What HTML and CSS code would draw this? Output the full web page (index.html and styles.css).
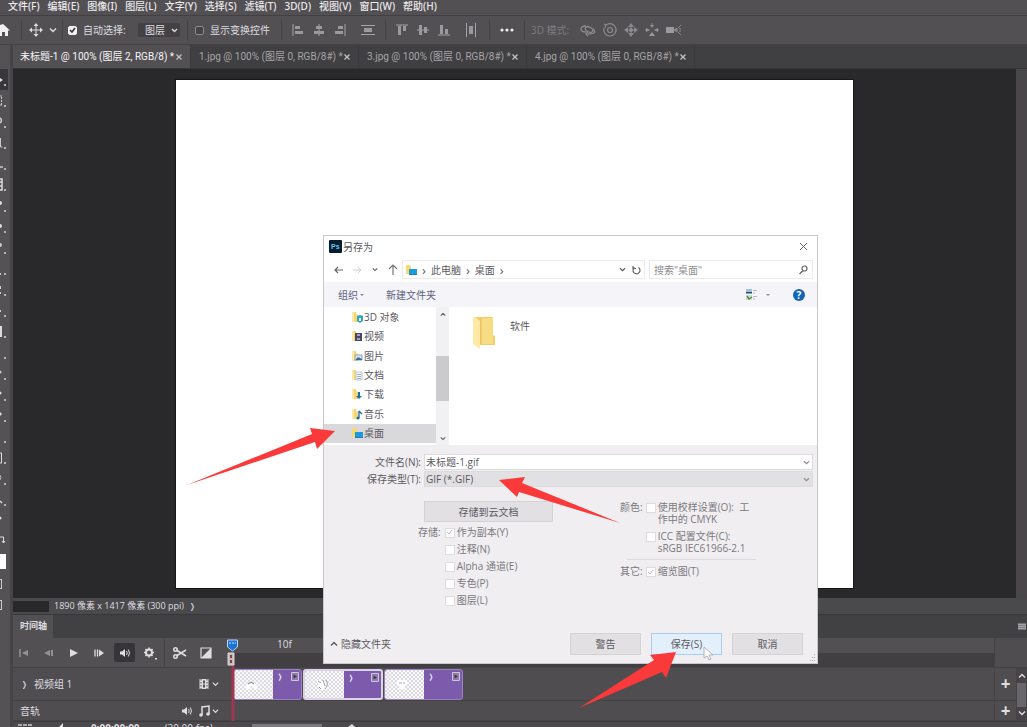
FILE: index.html
```html
<!DOCTYPE html>
<html lang="zh-CN">
<head>
<meta charset="utf-8">
<title>另存为</title>
<link rel="stylesheet" href="styles.css">
</head>
<body>
<svg class="defs" aria-hidden="true">
  <defs>
    <pattern id="checker" width="4" height="4" patternUnits="userSpaceOnUse"><rect width="4" height="4" fill="#f8f7f9"/><path d="M0 0h2v2H0zM2 2h2v2H2z" fill="#dddce0"/></pattern>
    <symbol id="chev" viewBox="0 0 8 6"><path d="M1 1.500 4 4.500 7 1.500" fill="none" stroke="currentColor" stroke-width="1.400"/></symbol>
    <symbol id="cross" viewBox="0 0 6 6"><path d="m.5.5 5 5M5.500.5l-5 5" fill="none" stroke="#c4c2c6" stroke-width="1.200"/></symbol>
    <symbol id="folder" viewBox="0 0 12 12"><path d="M1 1h4v2l2 1v7H1z" fill="#f3d774"/><path d="M1 1h2v10H1z" fill="#fbe9a5"/></symbol>
    <symbol id="desk" viewBox="0 0 12 12"><path d="M1 1h4l1 2v7H1z" fill="#f6d970"/><path d="M4 5h8v5H4z" fill="#1a9be0"/><path d="M4 10h8v1H4z" fill="#2f79b5"/></symbol>
    <symbol id="speaker" viewBox="0 0 12 10"><path d="M1 3.500h2L6 1v8L3 6.500H1z" fill="currentColor"/><path d="M7.500 3q1.500 2 0 4M9.300 1.500q2.500 3.500 0 7" fill="none" stroke="currentColor"/></symbol>
    <symbol id="clipend" viewBox="0 0 8 10"><path d="M.5.5h7v8h-7z" fill="#8f7da8" stroke="#d0c5dc"/><path d="M2.500 2.500v4L6 4.500z" fill="#3f3355"/></symbol>
  </defs>
</svg>

<div class="app">
  <nav class="menubar">
    <button>文件(F)</button><button>编辑(E)</button><button>图像(I)</button><button>图层(L)</button><button>文字(Y)</button><button>选择(S)</button><button>滤镜(T)</button><button>3D(D)</button><button>视图(V)</button><button>窗口(W)</button><button>帮助(H)</button>
  </nav>

  <div class="options">
    <div class="group g-home"><button class="ico" aria-label="主页"><svg width="10" height="12" viewBox="0 0 10 12"><path d="M0 1 3 0l7 6.500H8V12H5V8H2v4H0z" fill="#f0eff1"/></svg></button></div>
    <div class="group g-move">
      <button class="ico" aria-label="移动工具"><svg width="14" height="14" viewBox="0 0 14 14"><path d="M7 2v10M2 7h10" stroke="#dddcde"/><path d="m7 0 2.500 3h-5zM7 14l2.500-3h-5zM0 7l3-2.500v5zM14 7l-3-2.500v5z" fill="#dddcde"/></svg></button>
      <svg width="8" height="6"><use href="#chev"/></svg>
    </div>
    <div class="group g-auto">
      <label><input type="checkbox" class="dark" checked>自动选择:</label>
      <select class="layer-select" aria-label="自动选择"><option>图层</option></select>
    </div>
    <div class="group g-show"><label><input type="checkbox" class="dark">显示变换控件</label></div>
    <div class="group g-align">
      <button class="ico" aria-label="左对齐"><svg width="12" height="12" viewBox="0 0 12 12"><path d="M1 0v12" stroke="#a5a3a7"/><path d="M3 2h5v3H3zM3 7h8v3H3z" fill="#9b999d"/></svg></button>
      <button class="ico" aria-label="水平居中"><svg width="12" height="12" viewBox="0 0 12 12"><path d="M6 0v12" stroke="#a5a3a7"/><path d="M3 2h6v3H3zM1 7h10v3H1z" fill="#9b999d"/></svg></button>
      <button class="ico" aria-label="右对齐"><svg width="12" height="12" viewBox="0 0 12 12"><path d="M11 0v12" stroke="#a5a3a7"/><path d="M4 2h5v3H4zM1 7h8v3H1z" fill="#9b999d"/></svg></button>
      <button class="ico last" aria-label="垂直分布"><svg width="14" height="12" viewBox="0 0 14 12"><path d="M0 1.500h14M0 10.500h14" stroke="#a5a3a7"/><path d="M3 4h8v4H3z" fill="#9b999d"/></svg></button>
    </div>
    <div class="group g-align2">
      <button class="ico" aria-label="顶对齐"><svg width="12" height="12" viewBox="0 0 12 12"><path d="M0 1h12" stroke="#a5a3a7"/><path d="M2 2h3v9H2zM7 2h3v5H7z" fill="#9b999d"/></svg></button>
      <button class="ico" aria-label="垂直居中"><svg width="12" height="12" viewBox="0 0 12 12"><path d="M0 6h12" stroke="#a5a3a7"/><path d="M2 1h3v10H2zM7 3h3v6H7z" fill="#9b999d"/></svg></button>
      <button class="ico" aria-label="底对齐"><svg width="12" height="12" viewBox="0 0 12 12"><path d="M0 11h12" stroke="#a5a3a7"/><path d="M2 1h3v9H2zM7 5h3v5H7z" fill="#9b999d"/></svg></button>
      <button class="ico last" aria-label="水平分布"><svg width="12" height="14" viewBox="0 0 12 14"><path d="M1.500 0v14M10.500 0v14" stroke="#a5a3a7"/><path d="M4 3h4v8H4z" fill="#9b999d"/></svg></button>
    </div>
    <div class="group g-more"><button class="ico" aria-label="更多"><svg width="14" height="4" viewBox="0 0 14 4"><circle cx="2" cy="2" r="1.600" fill="#eee"/><circle cx="7" cy="2" r="1.600" fill="#eee"/><circle cx="12" cy="2" r="1.600" fill="#eee"/></svg></button></div>
    <div class="group g-3d">
      <span class="dim">3D 模式:</span>
      <svg width="16" height="14" viewBox="0 0 16 14" fill="none" stroke="#8b898d" stroke-width="1.300"><ellipse cx="9" cy="6.500" rx="4" ry="2.500" transform="rotate(25 9 6.500)"/><path d="M6 3Q1 3 1 6t5 3M13 6q3 3 1 4t-6 1M8 13l-2-2 2-2"/></svg>
      <svg width="14" height="14" viewBox="0 0 14 14" fill="none" stroke="#8b898d" stroke-width="1.200"><path d="M3 2a6.200 6.200 0 1 1-2 3M1 1l2 1-1 3"/><circle cx="7" cy="7" r="2.500"/></svg>
      <svg width="14" height="14" viewBox="0 0 14 14"><path d="M7 2v10M2 7h10" stroke="#8b898d"/><path d="m7 0 3 4H4zM7 14l3-4H4zM0 7l4-3v6zM14 7l-4-3v6z" fill="#8b898d"/><circle cx="7" cy="7" r="2" fill="#8b898d"/></svg>
      <svg width="14" height="14" viewBox="0 0 14 14"><path d="M7 5 5 2h4zM7 9l-3 4h6zM5 7 1 5v4zM9 7l4-2v4z" fill="#9b999d"/><path d="M7 0v4M0 7h4M10 7h4" stroke="#8b898d"/></svg>
      <svg width="16" height="10" viewBox="0 0 16 10"><path d="M0 2h8v6H0z" fill="#9b999d"/><path d="m8 5 3-2v4zM15 0l-3 3M15 10l-3-3M14 3v4" stroke="#8b898d" fill="#8b898d"/></svg>
    </div>
  </div>

  <div class="work">
    <div class="tools">
      <button class="on" aria-label="移动"><svg viewBox="0 0 8 20"><path d="M0 8l3 2-3 2z" fill="#ddd"/></svg></button>
      <button aria-label="选框"><svg viewBox="0 0 8 20"><path d="M0 5h2M0 14h2M1.500 6v9" stroke="#c8c6ca" stroke-dasharray="2 1"/></svg></button>
      <button aria-label="套索"><svg viewBox="0 0 8 20"><path d="M0 6q2 1 1 4l-1 1" fill="none" stroke="#ccc" stroke-width="1.500"/></svg></button>
      <button aria-label="选择"><svg viewBox="0 0 8 20"><path d="M.5 5v9h2" fill="none" stroke="#ccc"/></svg></button>
      <button aria-label="裁剪"><svg viewBox="0 0 8 20"><path d="M0 13h3" stroke="#ccc" stroke-width="1.500"/></svg></button>
      <button aria-label="图框"><svg viewBox="0 0 8 20"><path d="M0 4h2v11H0M0 7h2M0 11h2" fill="none" stroke="#ddd" stroke-width="1.500"/></svg></button>
      <button aria-label="吸管"><svg viewBox="0 0 8 20"><circle cx="0" cy="7" r="2" fill="#ddd"/></svg></button>
      <button aria-label="修复"><svg viewBox="0 0 8 20"><circle cx="0" cy="9" r="2" fill="#ddd"/></svg></button>
      <button aria-label="画笔"><svg viewBox="0 0 8 20"><circle cx="0" cy="7" r="2" fill="#ccc"/></svg></button>
      <button aria-label="图章"><svg viewBox="0 0 8 20"><path d="M0 14h1v2H0z" fill="#ccc"/></svg></button>
      <button aria-label="历史"><svg viewBox="0 0 8 20"><path d="M0 6h1v3H0zM0 12h1v2H0z" fill="#ccc"/></svg></button>
      <button aria-label="橡皮"><svg viewBox="0 0 8 20"><path d="M0 9h1v2H0z" fill="#ccc"/></svg></button>
      <button aria-label="渐变"><svg viewBox="0 0 8 20"><path d="M0 4h2v11H0z" fill="#ddd"/></svg></button>
      <button aria-label="模糊"><svg viewBox="0 0 8 20"></svg></button>
      <button aria-label="减淡"><svg viewBox="0 0 8 20"><circle cx="0" cy="8" r="1.500" fill="#ccc"/></svg></button>
      <button aria-label="钢笔"><svg viewBox="0 0 8 20"><circle cx="0" cy="8" r="1.500" fill="#ddd"/></svg></button>
      <button aria-label="文字"><svg viewBox="0 0 8 20"><path d="M0 6l2 2-2 2z" fill="#ddd"/></svg></button>
      <button aria-label="路径"><svg viewBox="0 0 8 20"></svg></button>
      <button aria-label="形状"><svg viewBox="0 0 8 20"><path d="M0 5h1.500v10H0" fill="none" stroke="#ddd"/></svg></button>
      <button aria-label="抓手"><svg viewBox="0 0 8 20"><path d="M0 6q2 2 0 5" fill="none" stroke="#bbb"/></svg></button>
      <button aria-label="缩放"><svg viewBox="0 0 8 20"><path d="M0 11l2 2" stroke="#ddd" stroke-width="1.500"/></svg></button>
      <button class="plain" aria-label="更多工具"><svg viewBox="0 0 8 20"><circle cx="0" cy="7" r="1.500" fill="#ddd"/></svg></button>
      <button class="plain" aria-label="切换颜色"><svg viewBox="0 0 8 20"><path d="M0 5h3.500v6M2 9l1.500 2L5 9" fill="none" stroke="#ddd"/></svg></button>
      <span class="swatch"></span>
      <span class="box"></span>
      <span class="box"></span>
    </div>

    <div class="stage">
      <div class="tabs">
        <div class="tab active"><span>未标题-1 @ 100% (图层 2, RGB/8) *</span><button aria-label="关闭标签"><svg width="6" height="6"><use href="#cross"/></svg></button></div>
        <div class="tab"><span>1.jpg @ 100% (图层 0, RGB/8#) *</span><button aria-label="关闭标签"><svg width="6" height="6"><use href="#cross"/></svg></button></div>
        <div class="tab"><span>3.jpg @ 100% (图层 0, RGB/8#) *</span><button aria-label="关闭标签"><svg width="6" height="6"><use href="#cross"/></svg></button></div>
        <div class="tab"><span>4.jpg @ 100% (图层 0, RGB/8#) *</span><button aria-label="关闭标签"><svg width="6" height="6"><use href="#cross"/></svg></button></div>
      </div>
      <div class="canvas"><div class="paper"></div><div class="vscroll"></div></div>
      <div class="status"><span class="zoom"></span><span>1890 像素 x 1417 像素 (300 ppi)</span><span class="twist">❭</span></div>

      <div class="tl-head"><span class="tl-tab">时间轴</span><button class="ico" aria-label="面板菜单"><svg width="9" height="7" viewBox="0 0 9 7"><path d="M0 .5h8v6H0z" fill="#a5a3a7"/><path d="M0 2.500h8M0 4.500h8" stroke="#807e82"/></svg></button></div>
      <div class="timeline">
        <div class="cell controls">
          <button class="ico faint" aria-label="首帧"><svg width="12" height="10" viewBox="0 0 12 10"><path d="M2 1v8" stroke="currentColor" stroke-width="1.500"/><path d="M10 2v6L4 5z" fill="currentColor"/></svg></button>
          <button class="ico faint" aria-label="上一帧"><svg width="12" height="10" viewBox="0 0 12 10"><path d="M7 2v6L1 5zM8 2h2v6H8z" fill="currentColor"/></svg></button>
          <button class="ico" aria-label="播放"><svg width="12" height="10" viewBox="0 0 12 10"><path d="M2 1v8l8-4z" fill="currentColor"/></svg></button>
          <button class="ico" aria-label="下一帧"><svg width="12" height="10" viewBox="0 0 12 10"><path d="M2 1.500v7M4.500 1.500v7" stroke="currentColor" stroke-width="1.300"/><path d="M6 1.500v7L11 5z" fill="currentColor"/></svg></button>
          <button class="ico mute" aria-label="静音"><svg width="12" height="10"><use href="#speaker"/></svg></button>
          <button class="ico" aria-label="设置"><svg width="13" height="14" viewBox="0 0 13 14"><circle cx="5" cy="6.500" r="3" fill="none" stroke="currentColor" stroke-width="2"/><path d="M5 1.500v1.500M5 10v1.500M0 6.500h1.500M8.500 6.500H10M1.500 3l1 1M8.500 3l-1 1M1.500 10l1-1M8.500 10l-1-1" stroke="currentColor" stroke-width="1.500"/><path d="M11 12h2v1.500h-2z" fill="currentColor"/></svg></button>
          <span class="vline"></span>
          <button class="ico cut" aria-label="拆分"><svg width="14" height="12" viewBox="0 0 14 12" fill="none" stroke="currentColor" stroke-width="1.600"><circle cx="2.500" cy="2.500" r="1.700"/><circle cx="2.500" cy="9.500" r="1.700"/><path d="M4 3.500 13 9M4 8.500 13 3"/></svg></button>
          <button class="ico" aria-label="过渡"><svg width="12" height="12" viewBox="0 0 12 12"><path d="M1 1h10v10H1z" fill="none" stroke="currentColor" stroke-width="1.200"/><path d="M11 1v10H1z" fill="currentColor"/></svg></button>
        </div>
        <div class="cell ruler"><span>10f</span><div class="playhead"><svg width="13" height="83" viewBox="0 0 13 83"><path d="M7 27v56" stroke="#a23550" stroke-width="3"/><path d="M1.500 2h10v7l-5 4-5-4z" fill="#1a73d6" stroke="#b8d5f5"/><path d="M3 5h7" stroke="#cfe5ff" stroke-dasharray="2 1"/><path d="M2 15h6v12H2z" fill="#c9b9bb" stroke="#ddd6d8"/><path d="M4 17h2v3H4zM4 22h2v3H4z" fill="#71474f"/></svg></div></div>
        <div class="cell corner"></div>

        <div class="cell group-row"><span class="twist">❭</span><span>视频组 1</span><svg class="push" width="10" height="12" viewBox="0 0 10 12"><path d="M.5 1h9v10h-9z" fill="#ddd"/><path d="M2 1v10M8 1v10" stroke="#555" stroke-dasharray="1.500 1.500"/><path d="M4 2.500h2v3H4zM4 6.500h2v3H4z" fill="#555"/></svg><svg width="7" height="6"><use href="#chev"/></svg></div>
        <div class="cell clips">
          <div class="clip"><svg class="thumb" viewBox="0 0 39 29"><path d="M0 0h39v29H0z" fill="url(#checker)"/><path d="m12 15 5-4 6 4v4h-3l-1-3h-2l-1 3h-4z" fill="#fff"/><path d="m14 14 3-2 3 2" stroke="#777" fill="none"/></svg><span>❭</span><svg class="end" width="8" height="10"><use href="#clipend"/></svg></div>
          <div class="clip sel"><svg class="thumb" viewBox="0 0 39 29"><path d="M0 0h39v29H0z" fill="url(#checker)"/><path d="m12 9 6 1 4 1 1 7-8 1z" fill="#fff"/><path d="m13 10 3 2M18 9l2 6M21 9q3 5-1 9M14 16l2 2" stroke="#999" fill="none"/></svg><span>❭</span><svg class="end" width="8" height="10"><use href="#clipend"/></svg></div>
          <div class="clip"><svg class="thumb" viewBox="0 0 39 29"><path d="M0 0h39v29H0z" fill="url(#checker)"/><path d="M12 10h10v4h-2v5h-6v-5h-2z" fill="#fff"/><path d="M14 13h3M19 12v2" stroke="#aaa"/></svg><span>❭</span><svg class="end" width="8" height="10"><use href="#clipend"/></svg></div>
        </div>
        <button class="cell plus">+</button>

        <div class="cell audio"><span>音轨</span><svg class="push" width="12" height="10"><use href="#speaker"/></svg><svg width="11" height="12" viewBox="0 0 11 12"><path d="M3 10V2l7-1v8" fill="none" stroke="#ddd" stroke-width="1.500"/><circle cx="2" cy="10" r="1.800" fill="#ddd"/><circle cx="9" cy="9" r="1.800" fill="#ddd"/></svg><svg width="7" height="6"><use href="#chev"/></svg></div>
        <div class="cell lane"></div>
        <button class="cell plus">+</button>
        <div class="tl-scroll"><svg width="8" height="6" class="flip"><use href="#chev"/></svg><span></span><svg width="8" height="6"><use href="#chev"/></svg></div>
      </div>
      <div class="foot"><svg width="15" height="4" viewBox="0 0 15 4"><path d="M0 2h4M5 2h4M10 2h4" stroke="#ccc" stroke-width="1.500"/></svg><svg width="8" height="4" viewBox="0 0 8 4"><path d="M1 4l4-4v4z" fill="#ddd"/></svg><b>0:00:00:00</b><span class="fps">(30.00 fps)</span><i></i><svg width="10" height="4" viewBox="0 0 10 4"><path d="M1 4l4-3 3 3z" fill="#ddd"/></svg></div>
    </div>
  </div>
</div>

<section class="dialog" role="dialog" aria-label="另存为">
  <header class="title"><svg width="13" height="13" viewBox="0 0 13 13"><rect width="13" height="13" rx="1" fill="#061e2c"/><text x="2" y="9" class="ps">Ps</text></svg><span>另存为</span><button class="ico push" aria-label="关闭"><svg width="9" height="9" viewBox="0 0 9 9"><path d="m1 1 7 7M8 1 1 8" stroke="#666"/></svg></button></header>
  <div class="nav">
    <button class="ico" aria-label="后退"><svg width="9" height="8" viewBox="0 0 9 8"><path d="M9 4H1M4 1 1 4l3 3" fill="none" stroke="#666" stroke-width="1.200"/></svg></button>
    <button class="ico" aria-label="前进"><svg width="9" height="8" viewBox="0 0 9 8"><path d="M0 4h8M5 1l3 3-3 3" fill="none" stroke="#ccc"/></svg></button>
    <button class="ico" aria-label="最近"><svg width="6" height="5"><use href="#chev"/></svg></button>
    <button class="ico" aria-label="上一级"><svg width="10" height="11" viewBox="0 0 10 11"><path d="M5 11V1M1 5l4-4 4 4" fill="none" stroke="#777" stroke-width="1.200"/></svg></button>
    <div class="address"><svg width="12" height="12"><use href="#desk"/></svg><i>›</i><span>此电脑</span><i>›</i><span>桌面</span><i>›</i><svg class="push" width="7" height="5"><use href="#chev"/></svg><svg class="refresh" width="9" height="10" viewBox="0 0 9 10"><path d="M2.500 2.500a3.500 3.500 0 1 0 4 0M1 1v2.500h3" fill="none" stroke="#666" stroke-width="1.200"/></svg></div>
    <div class="search"><input type="text" aria-label="搜索桌面" placeholder='搜索"桌面"'><svg width="9" height="10" viewBox="0 0 9 10"><circle cx="5.500" cy="3.500" r="2.500" fill="none" stroke="#666" stroke-width="1.200"/><path d="M4 5.500.5 9" stroke="#666" stroke-width="1.300"/></svg></div>
  </div>
  <div class="bar">
    <button>组织<svg width="5" height="4" viewBox="0 0 5 4"><path d="M0 1h4L2 3z" fill="#889"/></svg></button><button>新建文件夹</button>
    <svg class="push" width="13" height="13" viewBox="0 0 13 13"><path d="M1 1h6v4H1z" fill="#9fc3e3"/><path d="M1 4h6v1.500H1z" fill="#244a72"/><path d="M1 7h6v5H1z" fill="#cfe0c8"/><path d="m2 8 2 3 3-2" stroke="#55884b" fill="none" stroke-width="1.500"/><path d="M8 2.500h4M8 5h2M8 8.500h4M8 11h2" stroke="#bbb"/></svg>
    <svg width="5" height="4" viewBox="0 0 5 4"><path d="M0 1h4L2 3z" fill="#889"/></svg>
    <button class="help" aria-label="帮助">?</button>
  </div>
  <div class="browse">
    <ul class="tree">
      <li><svg width="12" height="12"><use href="#folder"/><path d="M6 5l3-1 3 1v5l-3 2-3-2z" fill="#2aa8c4"/><path d="M8 7h2v3H8z" fill="#fff"/></svg>3D 对象</li>
      <li><svg width="12" height="12"><use href="#folder"/><path d="M4 3h7v8H4z" fill="#4a4860"/><path d="M6 4h3v2H6zM6 8h3v2H6z" fill="#9aa3c8"/></svg>视频</li>
      <li><svg width="12" height="12"><use href="#folder"/><path d="M4 5h7v5H4z" fill="#dceaf5" stroke="#8ea3b5"/><path d="m5 9 2-2 4 2v1H5z" fill="#33719c"/></svg>图片</li>
      <li><svg width="12" height="12"><use href="#folder"/><path d="M5 3h6v8H5z" fill="#f4f6fa" stroke="#c0c8d4"/><path d="M6 5.500h4M6 7.500h4M6 9.500h4" stroke="#9db6d4"/></svg>文档</li>
      <li><svg width="12" height="12"><use href="#folder"/><path d="M8 4v5" stroke="#146f9b" stroke-width="2"/><path d="M5 8h6l-3 3z" fill="#146f9b"/></svg>下载</li>
      <li><svg width="12" height="12"><use href="#folder"/><path d="M8 3v7M8 3l3 3" stroke="#1a6aa5" stroke-width="1.300"/><circle cx="7" cy="10" r="1.500" fill="#1a6aa5"/></svg>音乐</li>
      <li class="selected"><svg width="12" height="12"><use href="#desk"/></svg>桌面</li>
    </ul>
    <div class="scroll"><svg width="6" height="5" class="flip"><use href="#chev"/></svg><span></span><svg width="6" height="5"><use href="#chev"/></svg></div>
    <div class="files"><svg width="26" height="34" viewBox="0 0 26 34"><path d="M3 1h19v18l2 1v9H8z" fill="#f1cd69"/><path d="M11 2h11v26H11z" fill="#f8dc84"/><path d="M2 1h2l5 4v28L2 28z" fill="#ffe9a4"/><path d="M9.500 5v24" stroke="#e6c468"/></svg><span>软件</span></div>
  </div>
  <form class="form" onsubmit="return false">
    <div class="fields">
      <label for="fname">文件名(N):</label><div class="combo"><input id="fname" type="text" value="未标题-1.gif"><svg width="7" height="5"><use href="#chev"/></svg></div>
      <label for="ftype">保存类型(T):</label><div class="combo gray"><select id="ftype"><option>GIF (*.GIF)</option></select><svg width="7" height="5"><use href="#chev"/></svg></div>
    </div>
    <div class="opts">
      <div class="left">
        <button class="btn cloud">存储到云文档</button>
        <div class="save-list">
          <span>存储:</span>
          <div>
            <label><input type="checkbox" checked disabled>作为副本(Y)</label>
            <label><input type="checkbox" disabled>注释(N)</label>
            <label><input type="checkbox" disabled>Alpha 通道(E)</label>
            <label><input type="checkbox" disabled>专色(P)</label>
            <label><input type="checkbox" disabled>图层(L)</label>
          </div>
        </div>
      </div>
      <div class="right">
        <div class="pair"><span>颜色:</span><div><label><input type="checkbox" disabled><span>使用校样设置(O):&nbsp; 工<br>作中的 CMYK</span></label><label><input type="checkbox" disabled><span>ICC 配置文件(C):<br>sRGB IEC61966-2.1</span></label></div></div>
        <hr>
        <div class="pair"><span>其它:</span><div><label><input type="checkbox" checked disabled><span>缩览图(T)</span></label></div></div>
      </div>
    </div>
    <footer>
      <button class="hide"><svg width="8" height="6" class="flip"><use href="#chev"/></svg>隐藏文件夹</button>
      <button class="btn push">警告</button><button class="btn primary">保存(S)</button><button class="btn">取消</button>
    </footer>
  </form>
  <svg class="grip" width="8" height="8" viewBox="0 0 8 8"><path d="M6 0h1v1H6zM4 3h1v1H4zM6 3h1v1H6zM2 6h1v1H2zM4 6h1v1H4zM6 6h1v1H6z" fill="#aaa"/></svg>
</section>

<svg class="arrow a1" width="150" height="60" viewBox="187 427 150 60"><path d="M187 485 312 434 310 428 335 431 317 449 315 442Z" fill="#fa3a3a"/></svg>
<svg class="arrow a2" width="124" height="50" viewBox="498 475 124 50"><path d="M499 480 525 477 522 483 620 523 519 492 517 497Z" fill="#fa3a3a"/></svg>
<svg class="arrow a3" width="100" height="60" viewBox="578 650 100 60"><path d="M676 652 650 655 654 660 579 708 662 672 666 678Z" fill="#fa3a3a"/></svg>
<svg class="cursor" width="11" height="15" viewBox="0 0 11 15"><path d="M1 1v11l3-2 2 4 2-1-2-4h4z" fill="#fff" stroke="#b0b2ba"/></svg>
</body>
</html>
```
FILE: styles.css
```css
* { box-sizing: border-box; }
body { margin: 0; height: 100vh; overflow: hidden; position: relative; background: #525053; color: #dfdde0; font: 10px/14px "Open Sans", "Noto Sans CJK SC", sans-serif; }
button, input, select { font: inherit; color: inherit; margin: 0; padding: 0; border: 0; background: none; }
svg { display: block; flex: none; overflow: visible; }
select { appearance: none; }
.defs { position: absolute; width: 0; height: 0; }
.push { margin-left: auto; }
.flip { transform: rotate(180deg); }
.ico { display: flex; align-items: center; justify-content: center; }

.app { display: flex; flex-direction: column; height: 100%; }
.menubar { display: flex; gap: 8px; height: 16px; padding: 0 8px; border-bottom: 1px solid #424043; font-family: "Noto Sans", "Noto Sans CJK SC", sans-serif; color: #eceaed; white-space: nowrap; }
.menubar button { line-height: 12px; height: 12px; font-weight: 500; }

.options { display: flex; align-items: center; height: 29px; border-bottom: 1px solid #434144; white-space: nowrap; }
.group { display: flex; align-items: center; height: 20px; border-right: 1px solid #454346; }
.group label { display: flex; align-items: center; gap: 6px; }
.g-home { width: 22px; }
.g-move { gap: 6px; padding: 0 6px; width: 41px; padding-left: 7px; }
.g-auto { justify-content: space-between; width: 125px; padding: 0 7px 0 5px; }
.g-show { width: 94px; padding-left: 7px; }
.g-align, .g-align2 { gap: 9px; width: 104px; padding-left: 10px; }
.g-align .last, .g-align2 .last { margin-left: 6px; }
.g-more { width: 35px; justify-content: center; }
.g-3d { gap: 7px; padding-left: 6px; border: 0; }
.dim { color: #7e7c80; margin-right: 4px; }
.layer-select { width: 42px; height: 14px; padding-left: 7px; border-radius: 2px; background: #434144 url("data:image/svg+xml,%3Csvg xmlns='http://www.w3.org/2000/svg' width='7' height='5'%3E%3Cpath d='M1 1l2.500 2.500L6 1' fill='none' stroke='%23ddd' stroke-width='1.300'/%3E%3C/svg%3E") no-repeat right 2px center; line-height: 14px; }
input[type="checkbox"] { appearance: none; flex: none; width: 10px; height: 10px; border: 1px solid #dcdbde; background: #fff no-repeat center; }
input[type="checkbox"].dark { width: 9px; height: 9px; border: 1px solid #8a888c; border-radius: 2px; background-color: #454346; }
input[type="checkbox"].dark:checked { border-color: #f0eff1; background-color: #f0eff1; background-image: url("data:image/svg+xml,%3Csvg xmlns='http://www.w3.org/2000/svg' width='7' height='7'%3E%3Cpath d='M1 3l2 2 3-4' fill='none' stroke='%23333' stroke-width='1.500'/%3E%3C/svg%3E"); }
input[type="checkbox"]:disabled:checked { background-image: url("data:image/svg+xml,%3Csvg xmlns='http://www.w3.org/2000/svg' width='7' height='7'%3E%3Cpath d='M1 3l2 2 3-4' fill='none' stroke='%23bbb'/%3E%3C/svg%3E"); }

.work { display: flex; flex: 1; min-height: 0; }
.tools { display: flex; flex-direction: column; width: 13px; padding-top: 24px; border-right: 3px solid #464447; background: #545255; }
.tools button { position: relative; flex: none; width: 8px; height: 21px; }
.tools button svg { width: 8px; height: 20px; }
.tools button::after { content: ""; position: absolute; right: 2px; bottom: 4px; width: 2px; height: 2px; background: #b5b3b7; }
.tools .plain::after { display: none; }
.tools .on { background: #38363a; }
.swatch { width: 6px; height: 15px; margin: 2px 0 10px; background: #fff; }
.box { width: 2px; height: 10px; margin-bottom: 11px; border: 1px solid #ccc; border-left: 0; }

.stage { display: flex; flex: 1; flex-direction: column; min-width: 0; }
.tabs { display: flex; flex: none; height: 24px; background: #403f41; color: #a6a4a8; white-space: nowrap; border-bottom: 1px solid #343335; font-family: Roboto, "Noto Sans CJK SC", sans-serif; }
.tab { display: flex; align-items: center; justify-content: space-between; width: 168px; padding: 0 8px; border-right: 1px solid #3a393b; }
.tab.active { width: 178px; padding-left: 7px; background: #525053; color: #f8f6f9; }
.canvas { display: flex; flex: 1; min-height: 0; background: #29282a; }
.paper { flex: 1; margin: 11px 163px 10px 163px; background: #fff; box-shadow: 0 0 0 1px #161517; }
.vscroll { width: 11px; background: #49474a; }
.status { display: flex; align-items: center; flex: none; gap: 5px; height: 16px; background: #4a494b; font-size: 9px; }
.zoom { width: 36px; height: 11px; background: #28272a; }
.tl-head { display: flex; flex: none; align-items: center; justify-content: space-between; height: 24px; background: #414042; border-top: 1px solid #373638; }
.tl-tab { height: 23px; width: 40px; padding-left: 7px; line-height: 22px; font-size: 9px; font-weight: 700; background: #525053; }
.timeline { display: grid; flex: none; grid-template-columns: 219px 1fr 22px 11px; grid-template-rows: 30px 33px 20px; background: #4f4d50; }
.cell { display: flex; align-items: center; border-bottom: 1px solid #444245; min-width: 0; }
.controls { gap: 13px; padding-left: 5px; background: #525053; }
.controls .mute { width: 21px; height: 19px; margin: 0 -4px; background: #363438; border-radius: 2px; }
.controls .vline { width: 1px; height: 28px; background: #454346; margin: 0 0 0 -6px; }
.controls .cut { margin-left: -5px; }
.faint { color: #939195; }
.ruler { position: relative; align-items: flex-start; padding-left: 45px; line-height: 12px; background: linear-gradient(#525053 15px, #413f42 15px); }
.playhead { position: absolute; left: -6px; top: 0; z-index: 1; pointer-events: none; }
.corner { grid-column: 3 / 5; border-left: 1px solid #414042; }
.group-row { gap: 3px; padding: 0 13px 0 8px; }
.twist { width: 10px; font-size: 8px; }
.clips { gap: 1px; padding-left: 1px; }
.clip { position: relative; display: flex; width: 80px; height: 31px; border: 1px solid #9b82c2; border-radius: 3px; background: #7c5bad; overflow: hidden; }
.clip:first-child { width: 69px; }
.clip:last-child { width: 79px; }
.clip.sel { border: 2px solid #ddd3e8; }
.clip .thumb { width: 39px; height: 29px; }
.clip span { margin-left: 4px; font-size: 7px; color: #fff; }
.clip .end { position: absolute; right: 2px; top: 2px; }
.plus { justify-content: center; font-size: 17px; font-weight: 700; border-left: 1px solid #464447; border-bottom: 1px solid #444245; }
.audio { gap: 6px; padding: 0 13px 0 7px; }
.audio svg:last-child { margin-left: -4px; }
.tl-scroll { grid-column: 4; grid-row: 2 / 4; display: flex; flex-direction: column; align-items: center; justify-content: space-between; padding: 5px 0; background: #454346; }
.tl-scroll span { width: 9px; height: 24px; background: #68666a; }
.foot { display: flex; flex: none; gap: 25px; height: 6px; padding-left: 5px; overflow: hidden; background: #4b494c; line-height: 12px; border-top: 1px solid #3c3b3d; }
.foot i { width: 70px; height: 3px; margin: 2px 0 0 14px; background: #7b797d; }
.foot svg { margin-top: 1px; }

.dialog { position: absolute; left: 323px; top: 235px; width: 495px; background: #fff; border: 1px solid #c8c6ca; color: #5c5a5f; }
.title { display: flex; align-items: center; gap: 1px; height: 21px; padding: 0 9px 0 5px; }
.ps { font: bold 7px "Liberation Sans", sans-serif; fill: #65c8fa; }
.nav { display: flex; align-items: center; gap: 10px; height: 25px; padding: 0 4px 0 10px; }
.address { display: flex; flex: 1; align-items: center; gap: 5px; height: 19px; margin-left: -6px; padding: 0 3px 0 2px; border: 1px solid #eceaed; }
.address i { font-style: normal; font-size: 13px; line-height: 12px; }
.refresh { margin-left: 1px; }
.search { display: flex; align-items: center; width: 164px; height: 19px; margin-left: -6px; padding: 0 4px; border: 1px solid #eceaed; }
.search input { flex: 1; min-width: 0; }
.search input::placeholder { color: #8d8b90; opacity: 1; }
.bar { display: flex; align-items: center; gap: 8px; height: 25px; padding: 0 12px 0 14px; background: #f5f4f9; color: #5c6280; }
.bar button { display: flex; align-items: center; gap: 2px; margin-right: 13px; }
.bar .help { width: 12px; height: 12px; margin: 0 0 0 14px; justify-content: center; border-radius: 50%; background: #1264b8; color: #fff; font-weight: 700; line-height: 12px; }
.browse { display: flex; height: 138px; }
.tree { display: flex; flex-direction: column; width: 112px; margin: 0; padding: 0 0 2px; list-style: none; }
.tree li { display: flex; flex: 1; align-items: center; gap: 1px; padding-left: 27px; }
.tree .selected { background: #d9d8da; }
.scroll { display: flex; flex-direction: column; align-items: center; justify-content: space-between; width: 13px; padding: 5px 0 4px; background: #f1f0f2; }
.scroll span { width: 13px; height: 45px; margin-top: 4px; background: #cbcacd; }
.files { display: flex; align-items: flex-start; gap: 13px; padding: 9px 0 0 22px; }
.files span { padding-top: 3px; }
.form { padding: 9px 4px 8px; background: #f0eef1; }
.fields { display: grid; grid-template-columns: 93px 1fr; column-gap: 3px; row-gap: 1px; }
.fields label { text-align: right; line-height: 16px; white-space: nowrap; }
.combo { display: flex; align-items: center; height: 16px; padding: 0 2px 0 0; border: 1px solid #dcdbde; background: #fff; color: #8e8c91; }
.combo.gray { background: #e1e0e2; }
.combo input, .combo select { flex: 1; min-width: 0; height: 14px; padding-left: 1px; color: #5c5a5f; }
.opts { display: flex; padding: 14px 0 0 90px; color: #7b797e; }
.btn { width: 71px; height: 22px; border: 1px solid #d3d2d5; background: #e2e0e3; color: #5c5a5f; }
.cloud { display: block; width: 129px; height: 21px; margin-left: 6px; }
.left { width: 202px; }
.save-list { display: flex; gap: 4px; padding-top: 2px; line-height: 17px; }
.save-list label { display: flex; align-items: center; gap: 2px; height: 17px; white-space: nowrap; }
.right { width: 136px; line-height: 12px; }
.pair { display: flex; gap: 3px; white-space: nowrap; }
.pair label { display: flex; align-items: flex-start; gap: 2px; margin-bottom: 5px; }
.pair input { margin-top: 2px; }
.right hr { height: 1px; margin: 0 0 5px 7px; border: 0; background: #dddbde; }
footer { display: flex; align-items: center; gap: 10px; padding: 24px 10px 0 2px; }
.hide { display: flex; align-items: center; gap: 3px; }
.primary { background: #e3effb; border-color: #a9cdee; }
.grip { position: absolute; right: 1px; bottom: 1px; }

.arrow { position: absolute; pointer-events: none; }
.a1 { left: 187px; top: 427px; }
.a2 { left: 498px; top: 475px; }
.a3 { left: 578px; top: 650px; }
.cursor { position: absolute; left: 703px; top: 646px; }
```
